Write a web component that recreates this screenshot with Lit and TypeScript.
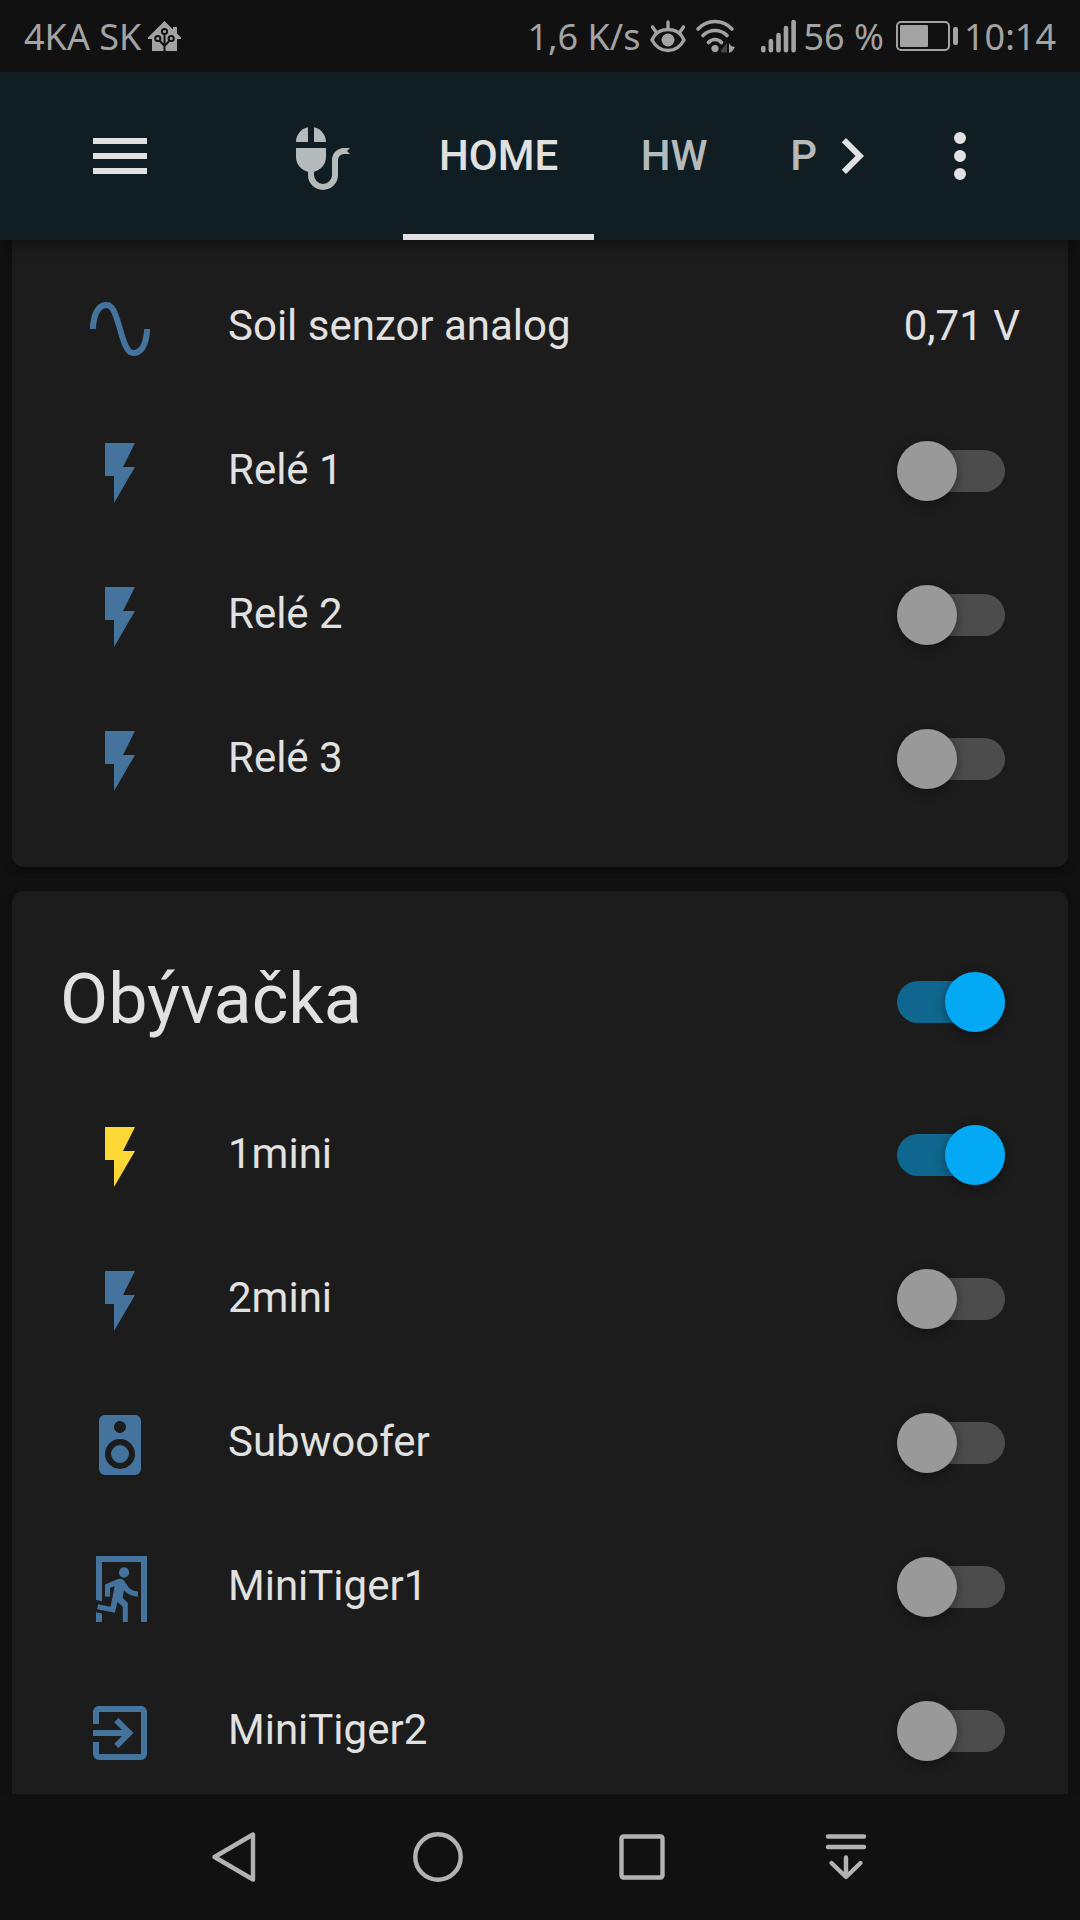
import { LitElement, html, css, svg, nothing } from "lit";
import { customElement, property, state } from "lit/decorators.js";

const ICONS: Record<string, string> = {
  menu: "M3,6H21V8H3V6M3,11H21V13H3V11M3,16H21V18H3V16Z",
  mouse:
    "M14,7H10V2.1C12.28,2.56 14,4.58 14,7M4,7C4,4.58 5.72,2.56 8,2.1V7H4M14,12C14,14.42 12.28,16.44 10,16.9V18A3,3 0 0,0 13,21A3,3 0 0,0 16,18V13A4,4 0 0,1 20,9H22L21,10L22,11H20A2,2 0 0,0 18,13V18A5,5 0 0,1 13,23A5,5 0 0,1 8,18V16.9C5.72,16.44 4,14.42 4,12V9H14V12Z",
  chevron: "M8.59,16.58L13.17,12L8.59,7.41L10,6L16,12L10,18L8.59,16.58Z",
  dots: "M12,16A2,2 0 0,1 14,18A2,2 0 0,1 12,20A2,2 0 0,1 10,18A2,2 0 0,1 12,16M12,10A2,2 0 0,1 14,12A2,2 0 0,1 12,14A2,2 0 0,1 10,12A2,2 0 0,1 12,10M12,4A2,2 0 0,1 14,6A2,2 0 0,1 12,8A2,2 0 0,1 10,6A2,2 0 0,1 12,4Z",
  sine: "M16.5,21C13.5,21 12.31,16.76 11.05,12.28C10.14,9.04 9,5 7.5,5C4.11,5 4,11.93 4,12H2C2,11.63 2.06,3 7.5,3C10.5,3 11.71,7.25 12.97,11.74C13.83,14.8 15,19 16.5,19C19.94,19 20.03,12.07 20.03,12H22.03C22.03,12.37 21.97,21 16.5,21Z",
  flash: "M7,2V13H10V22L17,10H13L17,2H7Z",
  speaker:
    "M12,12A3,3 0 0,0 9,15A3,3 0 0,0 12,18A3,3 0 0,0 15,15A3,3 0 0,0 12,12M12,20A5,5 0 0,1 7,15A5,5 0 0,1 12,10A5,5 0 0,1 17,15A5,5 0 0,1 12,20M12,4A2,2 0 0,1 14,6A2,2 0 0,1 12,8C10.89,8 10,7.1 10,6C10,4.89 10.89,4 12,4M17,2H7C5.89,2 5,2.89 5,4V20A2,2 0 0,0 7,22H17A2,2 0 0,0 19,20V4C19,2.89 18.1,2 17,2Z",
  run: "M13.34,8.17C12.41,8.17 11.65,7.4 11.65,6.47A1.69,1.69 0 0,1 13.34,4.78C14.28,4.78 15.04,5.54 15.04,6.47C15.04,7.4 14.28,8.17 13.34,8.17M10.3,19.93L4.37,18.75L4.71,17.05L8.86,17.9L10.21,11.04L8.69,11.64V14.5H7V10.54L11.4,8.67L12.07,8.59C12.67,8.59 13.17,8.93 13.5,9.44L14.36,10.79C15.04,12 16.39,12.82 18,12.82V14.5C16.14,14.5 14.44,13.67 13.34,12.4L12.84,14.94L14.61,16.63V23H12.92V17.9L11.14,16.21L10.3,19.93M21,23H19V3H6V16.11L4,15.69V1H21V23M6,23H4V19.78L6,20.2V23Z",
  exit: "M19,3H5C3.89,3 3,3.89 3,5V9H5V5H19V19H5V15H3V19A2,2 0 0,0 5,21H19A2,2 0 0,0 21,19V5C21,3.89 20.1,3 19,3M10.08,15.58L11.5,17L16.5,12L11.5,7L10.08,8.41L12.67,11H3V13H12.67L10.08,15.58Z",
};

const icon = (name: string) =>
  html`<svg class="icon" viewBox="0 0 24 24" aria-hidden="true">${svg`<path d=${ICONS[name]}></path>`}</svg>`;

interface Entity {
  id: string;
  name: string;
  icon: string;
  value?: string;
  on?: boolean;
}

@customElement("status-bar")
class StatusBar extends LitElement {
  static styles = css`
    :host {
      display: flex;
      align-items: center;
      justify-content: space-between;
      height: 72px;
      padding: 0 24px;
      background: #111111;
      color: #a3a3a3;
      font: 36px/48px "Noto Sans", sans-serif;
      white-space: nowrap;
    }
    span {
      padding-top: 2px;
    }
    .group {
      display: flex;
      align-items: center;
      gap: 6px;
    }
    .group.right {
      gap: 8px;
    }
    .phone {
      margin-left: 16px;
    }
    .charge {
      margin-right: 6px;
    }
    svg {
      display: block;
      fill: currentColor;
    }
    .line {
      fill: none;
      stroke: currentColor;
      stroke-linecap: round;
    }
    .cut {
      fill: none;
      stroke: #111111;
      stroke-width: 2;
    }
    .dim {
      opacity: 0.35;
    }
  `;

  render() {
    return html`
      <div class="group">
        <span>4KA SK</span>
        <svg width="35" height="32" viewBox="0 0 35 32" aria-hidden="true">
          <path d="M17.5 1L1 17.5V19H5V31H30V19H34V17.5L30 13.5V7H26V9.5Z"></path>
          <path class="cut" d="M17.5 14V31M12 20L17.5 26L23 20"></path>
          <circle class="cut" cx="17.5" cy="11.5" r="2.6"></circle>
          <circle class="cut" cx="10.8" cy="18.5" r="2.6"></circle>
          <circle class="cut" cx="24.2" cy="18.5" r="2.6"></circle>
        </svg>
      </div>
      <div class="group right">
        <span>1,6 K/s</span>
        <svg width="38" height="34" viewBox="0 0 38 34" aria-hidden="true">
          <path
            class="line"
            stroke-width="3.4"
            d="M3 21C6 14 12 10.5 19 10.5S32 14 35 21C32 27 26 31.5 19 31.5S6 27 3 21ZM19 3V9M3.5 8L7 13M34.5 8L31 13"
          ></path>
          <circle cx="19" cy="21" r="6.5"></circle>
        </svg>
        <svg width="41" height="36" viewBox="0 0 41 36" aria-hidden="true">
          <path
            class="line"
            stroke-width="3.6"
            d="M3 11Q10 3.5 20 3.5T37 11M8 17.5Q13 12.5 20 12.5T32 17.5M13.5 24.5Q16 21.5 20 21.5T26.5 24.5"
          ></path>
          <circle cx="20" cy="30.5" r="3.6"></circle>
          <path class="dim" d="M32 25V34.5H26V32Z"></path>
          <path d="M34 25L36 28L40 29L37.5 33L34 35Z"></path>
        </svg>
        <div class="group phone">
          <svg width="38" height="36" viewBox="0 0 38 36" aria-hidden="true">
            <path
              class="line"
              stroke-width="4.6"
              d="M3.3 30V32.3M10.9 23V32.3M18.5 17V32.3M26 10V32.3M33.6 4V32.3"
            ></path>
          </svg>
          <span class="charge">56 %</span>
          <svg width="62" height="30" viewBox="0 0 62 30" aria-hidden="true">
            <rect class="line" x="1" y="1" width="52" height="28" rx="4" stroke-width="2"></rect>
            <rect x="4" y="4" width="28" height="22" rx="1"></rect>
            <rect x="57" y="6" width="5" height="18" rx="2"></rect>
          </svg>
          <span>10:14</span>
        </div>
      </div>
    `;
  }
}

@customElement("view-toolbar")
class ViewToolbar extends LitElement {
  @state() private active = "HOME";

  static styles = css`
    :host {
      position: relative;
      z-index: 1;
      display: flex;
      height: 168px;
      padding: 0 84px;
      background: #101e24;
      color: #e1e1e1;
      box-shadow: 0 0 18px rgba(0, 0, 0, 0.6);
      clip-path: inset(0 0 -24px 0);
    }
    button {
      display: flex;
      align-items: center;
      justify-content: center;
      flex: none;
      margin: 0;
      padding: 0;
      border: 0;
      background: none;
      color: inherit;
      font: 500 42px/60px Roboto, sans-serif;
    }
    .icon {
      display: block;
      width: 72px;
      height: 72px;
      fill: currentColor;
    }
    nav {
      display: flex;
      flex: 1;
      min-width: 0;
      margin-left: 87px;
      overflow: hidden;
    }
    .tab {
      box-sizing: border-box;
      min-width: 160px;
      padding: 6px 36px 0;
      border-bottom: 6px solid transparent;
      color: #b5babb;
    }
    .tab .icon {
      margin: 2px 6px 0 0;
    }
    .tab.last {
      min-width: 0;
      padding-right: 0;
    }
    .tab.active {
      border-bottom-color: #e1e1e1;
      color: #e1e1e1;
    }
    .more {
      margin-left: 36px;
    }
  `;

  private tab(name: string, content: unknown, extra = "") {
    const active = this.active === name;
    return html`<button
      class="tab ${extra} ${active ? "active" : ""}"
      aria-label=${name}
      aria-current=${active ? "page" : nothing}
      @click=${() => (this.active = name)}
    >
      ${content}
    </button>`;
  }

  render() {
    return html`
      <button aria-label="Menu">${icon("menu")}</button>
      <nav>
        ${this.tab("Mouse", icon("mouse"))} ${this.tab("HOME", "HOME")} ${this.tab("HW", "HW")}
        ${this.tab("P", "P", "last")}
      </nav>
      <button aria-label="Next tabs">${icon("chevron")}</button>
      <button class="more" aria-label="More options">${icon("dots")}</button>
    `;
  }
}

@customElement("entities-card")
class EntitiesCard extends LitElement {
  @property() heading = "";
  @property({ attribute: false }) entities: Entity[] = [];

  static styles = css`
    :host {
      display: block;
      padding: 0 48px 48px;
      border-radius: 12px;
      background: #1c1c1c;
      color: #e1e1e1;
      box-shadow: 0 6px 6px 0 rgba(0, 0, 0, 0.14), 0 3px 15px 0 rgba(0, 0, 0, 0.12),
        0 9px 3px -6px rgba(0, 0, 0, 0.2);
      font: 42px/60px Roboto, sans-serif;
    }
    .header {
      display: flex;
      align-items: center;
      justify-content: space-between;
      padding: 48px 0 36px;
    }
    h1 {
      margin: 0;
      font: 400 70px/120px Roboto, sans-serif;
    }
    .header .toggle {
      margin-top: 6px;
    }
    .rows {
      display: grid;
      gap: 24px;
    }
    .row {
      display: flex;
      align-items: center;
      height: 120px;
    }
    .badge {
      display: flex;
      justify-content: center;
      width: 120px;
      padding-top: 4px;
      color: #44739e;
    }
    .badge.on {
      color: #fdd835;
    }
    .icon {
      display: block;
      width: 72px;
      height: 72px;
      fill: currentColor;
    }
    .name {
      flex: 1;
      margin-left: 48px;
      padding-bottom: 2px;
    }
    .value {
      padding-bottom: 2px;
    }
    .toggle {
      appearance: none;
      flex: none;
      display: flex;
      align-items: center;
      width: 108px;
      height: 42px;
      margin: 0 15px 0 0;
      border-radius: 21px;
      background: #4c4c4c;
    }
    .toggle::before {
      content: "";
      width: 60px;
      height: 60px;
      flex: none;
      border-radius: 50%;
      background: #999999;
      box-shadow: 0 3px 12px rgba(0, 0, 0, 0.4);
    }
    .toggle:checked {
      justify-content: flex-end;
      background: #0f678f;
    }
    .toggle:checked::before {
      background: #03a9f4;
    }
  `;

  private toggle(entity: Entity, event: Event) {
    const on = (event.target as HTMLInputElement).checked;
    this.entities = this.entities.map((e) => (e === entity ? { ...e, on } : e));
  }

  private toggleAll(event: Event) {
    const on = (event.target as HTMLInputElement).checked;
    this.entities = this.entities.map((e) => ({ ...e, on }));
  }

  render() {
    return html`
      ${this.heading
        ? html`<div class="header">
            <h1 id="heading">${this.heading}</h1>
            <input
              class="toggle"
              type="checkbox"
              role="switch"
              aria-labelledby="heading"
              .checked=${this.entities.some((e) => e.on)}
              @change=${this.toggleAll}
            />
          </div>`
        : nothing}
      <div class="rows">
        ${this.entities.map(
          (e) => html`<div class="row">
            <span class="badge ${e.on ? "on" : ""}">${icon(e.icon)}</span>
            ${e.value
              ? html`<span class="name">${e.name}</span><span class="value">${e.value}</span>`
              : html`<label class="name" for=${e.id}>${e.name}</label>
                  <input
                    class="toggle"
                    type="checkbox"
                    role="switch"
                    id=${e.id}
                    .checked=${!!e.on}
                    @change=${(ev: Event) => this.toggle(e, ev)}
                  />`}
          </div>`
        )}
      </div>
    `;
  }
}

@customElement("system-nav")
class SystemNav extends LitElement {
  static styles = css`
    :host {
      display: grid;
      grid-template-columns: repeat(4, 1fr);
      height: 126px;
      padding: 0 132px;
      background: #111111;
      color: #b3b3b3;
      position: relative;
      z-index: 1;
    }
    button {
      display: flex;
      align-items: center;
      justify-content: center;
      padding: 0;
      border: 0;
      background: none;
      color: inherit;
    }
    svg {
      display: block;
      width: 52px;
      height: 52px;
      fill: none;
      stroke: currentColor;
      stroke-width: 4.4;
      stroke-linecap: round;
      stroke-linejoin: round;
    }
  `;

  render() {
    return html`
      <button aria-label="Back">
        <svg viewBox="0 0 52 52"><path d="M45 3.5V48.5L6.5 26Z"></path></svg>
      </button>
      <button aria-label="Home">
        <svg viewBox="0 0 52 52"><circle cx="26" cy="26" r="22.7"></circle></svg>
      </button>
      <button aria-label="Recent apps">
        <svg viewBox="0 0 52 52"><rect x="5.5" y="5.5" width="41" height="41" rx="2"></rect></svg>
      </button>
      <button aria-label="Hide panel">
        <svg viewBox="0 0 52 52">
          <path d="M8 5.5H44M8 16H44M26 26.5V45.5M11.5 32L26 46L40.5 32"></path>
        </svg>
      </button>
    `;
  }
}

const RELAYS: Entity[] = [
  { id: "soil", name: "Soil senzor analog", icon: "sine", value: "0,71 V" },
  { id: "rele1", name: "Relé 1", icon: "flash" },
  { id: "rele2", name: "Relé 2", icon: "flash" },
  { id: "rele3", name: "Relé 3", icon: "flash" },
];

const LIVING_ROOM: Entity[] = [
  { id: "mini1", name: "1mini", icon: "flash", on: true },
  { id: "mini2", name: "2mini", icon: "flash" },
  { id: "subwoofer", name: "Subwoofer", icon: "speaker" },
  { id: "tiger1", name: "MiniTiger1", icon: "run" },
  { id: "tiger2", name: "MiniTiger2", icon: "exit" },
];

@customElement("app-root")
class AppRoot extends LitElement {
  static styles = css`
    :host {
      display: flex;
      flex-direction: column;
      min-height: 100vh;
      background: #111111;
    }
    main {
      display: flex;
      flex-direction: column;
      flex: 1;
      gap: 24px;
      padding: 0 12px;
    }
    .scrolled {
      padding-top: 27px;
      border-top-left-radius: 0;
      border-top-right-radius: 0;
    }
    .continued {
      flex: 1;
      padding-bottom: 3px;
      border-bottom-left-radius: 0;
      border-bottom-right-radius: 0;
    }
  `;

  render() {
    return html`
      <status-bar></status-bar>
      <view-toolbar></view-toolbar>
      <main>
        <entities-card class="scrolled" .entities=${RELAYS}></entities-card>
        <entities-card class="continued" heading="Obývačka" .entities=${LIVING_ROOM}></entities-card>
      </main>
      <system-nav></system-nav>
    `;
  }
}
